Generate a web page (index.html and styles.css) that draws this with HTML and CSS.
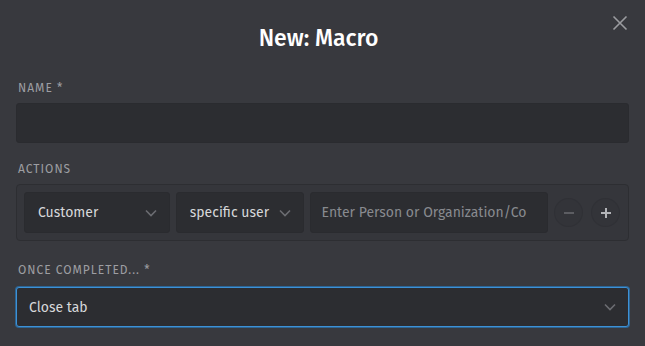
FILE: index.html
```html
<!DOCTYPE html>
<html lang="en">
<head>
    <meta charset="UTF-8">
    <meta name="viewport" content="width=device-width, initial-scale=1.0">
    <title>New: Macro</title>
    <link rel="stylesheet" href="styles.css">
</head>
<body>
    <div class="modal">
        <div class="modal-header">
            <h1 class="modal-title">New: Macro</h1>
            <button class="modal-close" aria-label="Close">
                <svg width="16" height="16" viewBox="0 0 16 16"><path d="M1.5 1.5l13 13M14.5 1.5l-13 13" stroke="currentColor" stroke-width="1.6" fill="none"/></svg>
            </button>
        </div>

        <div class="field">
            <label class="field-label">Name *</label>
            <input class="form-control" type="text">
        </div>

        <div class="field field-actions">
            <label class="field-label">Actions</label>
            <div class="actions-box">
                <div class="select select-attr">
                    <span>Customer</span>
                    <svg class="chevron" width="12" height="8" viewBox="0 0 12 8"><path d="M1 1.5l5 5 5-5" stroke="currentColor" stroke-width="1.6" fill="none"/></svg>
                </div>
                <div class="select select-op">
                    <span>specific user</span>
                    <svg class="chevron" width="12" height="8" viewBox="0 0 12 8"><path d="M1 1.5l5 5 5-5" stroke="currentColor" stroke-width="1.6" fill="none"/></svg>
                </div>
                <div class="select select-value">
                    <span class="placeholder">Enter Person or Organization/Co</span>
                </div>
                <button class="round-btn is-disabled" aria-label="Remove">
                    <svg width="12" height="12" viewBox="0 0 12 12"><path d="M1 6h10" stroke="currentColor" stroke-width="2"/></svg>
                </button>
                <button class="round-btn" aria-label="Add">
                    <svg width="12" height="12" viewBox="0 0 12 12"><path d="M1 6h10M6 1v10" stroke="currentColor" stroke-width="2"/></svg>
                </button>
            </div>
        </div>

        <div class="field">
            <label class="field-label label-once">Once completed... *</label>
            <div class="select select-focus">
                <span>Close tab</span>
                <svg class="chevron" width="12" height="8" viewBox="0 0 12 8"><path d="M1 1.5l5 5 5-5" stroke="currentColor" stroke-width="1.6" fill="none"/></svg>
            </div>
        </div>
    </div>
</body>
</html>
```

FILE: styles.css
```css
body {
    margin: 0;
    background-color: #38393e;
    font-family: "Fira Sans", Roboto, "Noto Sans", sans-serif;
    color: #d7d8da;
}
.modal {
    padding: 0 16px;
}
.modal-header {
    position: relative;
    height: 80px;
}
.modal-title {
    margin: 0;
    padding: 24px 8px 0 0;
    text-align: center;
    font-size: 23px;
    line-height: 28px;
    font-weight: 500;
    color: #ffffff;
}
.modal-close {
    position: absolute;
    top: 15px;
    right: 1px;
    padding: 0;
    border: 0;
    background: none;
    color: #9b9ca0;
    width: 16px;
    height: 16px;
}
.field {
    margin-bottom: 18px;
}
.field-actions {
    margin-bottom: 21px;
}
.field-label {
    display: block;
    font-size: 12px;
    line-height: 16px;
    letter-spacing: 1px;
    text-transform: uppercase;
    color: #9d9ea2;
    margin: 0 2px 7px;
}
.label-once {
    margin-bottom: 9px;
}
.form-control {
    display: block;
    box-sizing: border-box;
    width: 100%;
    height: 40px;
    margin: 0;
    background-color: #2c2d31;
    border: 1px solid #2a2b2f;
    border-radius: 3px;
}
.actions-box {
    display: flex;
    align-items: center;
    gap: 5px;
    padding: 7px 8px 7px 7px;
    background-color: #35363b;
    border: 1px solid #2d2e32;
    border-radius: 4px;
}
.select {
    box-sizing: border-box;
    display: flex;
    align-items: center;
    height: 41px;
    padding: 0 12px;
    background-color: #2c2d31;
    border: 1px solid #2a2b2f;
    border-radius: 3px;
    font-size: 14px;
    white-space: nowrap;
    overflow: hidden;
}
.select span {
    flex: 1;
    overflow: hidden;
}
.select-attr {
    width: 146px;
    padding-left: 13px;
}
.select-op {
    width: 128px;
    padding-left: 13px;
    margin-left: 1px;
}
.select-value {
    width: 239px;
    padding-left: 11px;
    margin-left: 1px;
}
.placeholder {
    color: #888a8f;
}
.chevron {
    color: #6b6c71;
    flex: none;
    margin-left: 8px;
}
.round-btn {
    width: 29px;
    height: 29px;
    padding: 0;
    border-radius: 50%;
    border: 1px solid #303136;
    background-color: #333439;
    color: #b3b4b8;
    display: flex;
    align-items: center;
    justify-content: center;
    margin-left: 1px;
}
.round-btn + .round-btn {
    margin-left: 3px;
}
.round-btn.is-disabled {
    color: #5c5d62;
}
.select-focus {
    height: 40px;
    border: 1px solid #3d91d6;
    box-shadow: 0 0 0 1px #2e6593;
    padding-left: 12px;
    padding-right: 12px;
}
```
